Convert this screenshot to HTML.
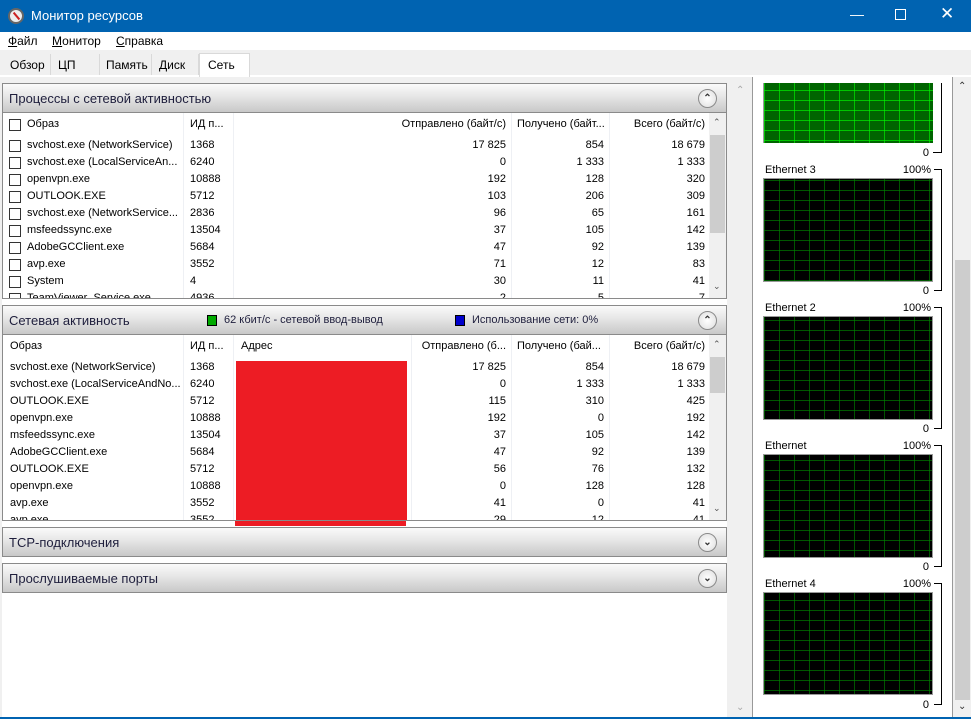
<!DOCTYPE html>
<html><head><meta charset="utf-8"><style>
*{margin:0;padding:0;box-sizing:border-box}
body{width:971px;height:719px;position:relative;overflow:hidden;background:#f0f0f0;font-family:"Liberation Sans",sans-serif;font-size:11px;color:#000}
.a{position:absolute}
.title{left:0;top:0;width:971px;height:32px;background:#0063b1;color:#fff;font-size:13px}
.menu{left:0;top:32px;width:971px;height:18px;background:#fff;font-size:12px}
.menu span{position:absolute;top:2px}
.tab{position:absolute;top:54px;height:21px;font-size:12px;padding:4px 0 0 0;border-right:1px solid #d9d9d9}
.hdr{position:absolute;left:2px;width:725px;height:30px;background:linear-gradient(#fafafa,#e6e6e6 45%,#c8c8c8);border:1px solid #8a8a8a;font-size:13px;color:#1e1e3c}
.hdr .t{position:absolute;left:6px;top:7px}
.btn{position:absolute;right:9px;top:5px;width:19px;height:19px;border-radius:50%;border:1px solid #8a8a8a;background:radial-gradient(#fff,#ddd);font-size:10px;text-align:center;line-height:17px;font-weight:bold;color:#333}
.tbl{position:absolute;left:2px;width:725px;background:#fff;border-left:1px solid #8a8a8a;border-right:1px solid #8a8a8a;border-bottom:1px solid #8a8a8a;overflow:hidden}
.r{position:absolute;left:0;height:17px;width:708px;white-space:nowrap}
.r span{position:absolute;top:2px}
.cb{position:absolute;left:6px;top:3px;width:12px;height:12px;border:1px solid #333;background:#fff}
.rt{text-align:right}
.vl{position:absolute;top:0;bottom:0;width:1px;background:#eef0f4}
.sb{position:absolute;right:0;top:0;width:17px;bottom:0;background:#f0f0f0}
.lbl{position:absolute;font-size:11px}
.g{position:absolute;left:763px;width:170px;border-top:2px solid #999;border-left:1px solid #999}
</style></head><body>
<div class="a title"><div class="a" style="left:8px;top:8px;width:16px;height:16px;border-radius:50%;background:#eee;border:2px solid #666"><div class="a" style="left:2px;top:5px;width:9px;height:2px;background:#c22;transform:rotate(50deg)"></div></div>
<div class="a" style="left:31px;top:8px">Монитор ресурсов</div>
<div class="a" style="left:850px;top:6px;font-size:14px">&#8212;</div>
<div class="a" style="left:895px;top:9px;width:11px;height:11px;border:1px solid #fff"></div>
<div class="a" style="left:940px;top:4px;font-size:17px">&#10005;</div></div>
<div class="a menu"><span style="left:8px"><u>Ф</u>айл</span><span style="left:52px"><u>М</u>онитор</span><span style="left:116px"><u>С</u>правка</span></div>
<div class="a" style="left:0;top:50px;width:971px;height:27px;background:#f0f0f0;border-bottom:2px solid #fff"></div>
<div class="tab" style="left:4px;width:47px;padding-left:6px">Обзор</div>
<div class="tab" style="left:51px;width:49px;padding-left:7px">ЦП</div>
<div class="tab" style="left:100px;width:52px;padding-left:6px">Память</div>
<div class="tab" style="left:152px;width:47px;padding-left:7px">Диск</div>
<div class="tab" style="left:199px;top:53px;height:24px;width:51px;background:#fff;border:1px solid #d9d9d9;border-bottom:none;padding-left:8px">Сеть</div>
<div class="a" style="left:2px;top:83px;width:725px;height:636px;background:#fff"></div>

<div class="hdr" style="top:83px"><div class="t">Процессы с сетевой активностью</div><div class="btn">&#8963;</div></div>
<div class="tbl" style="top:113px;height:186px">
<div class="vl" style="left:180px"></div><div class="vl" style="left:230px"></div><div class="vl" style="left:508px"></div><div class="vl" style="left:606px"></div>
<div class="r" style="top:3px;height:20px"><div class="cb"></div><span style="left:24px">Образ</span><span style="left:187px">ИД п...</span><span class="rt" style="right:205px">Отправлено (байт/с)</span><span style="left:514px">Получено (байт...</span><span class="rt" style="right:6px">Всего (байт/с)</span></div>
<div class="r" style="top:24px"><div class="cb"></div><span style="left:24px">svchost.exe (NetworkService)</span><span style="left:187px">1368</span><span style="right:205px">17 825</span><span style="right:107px">854</span><span style="right:6px">18 679</span></div>
<div class="r" style="top:41px"><div class="cb"></div><span style="left:24px">svchost.exe (LocalServiceAn...</span><span style="left:187px">6240</span><span style="right:205px">0</span><span style="right:107px">1 333</span><span style="right:6px">1 333</span></div>
<div class="r" style="top:58px"><div class="cb"></div><span style="left:24px">openvpn.exe</span><span style="left:187px">10888</span><span style="right:205px">192</span><span style="right:107px">128</span><span style="right:6px">320</span></div>
<div class="r" style="top:75px"><div class="cb"></div><span style="left:24px">OUTLOOK.EXE</span><span style="left:187px">5712</span><span style="right:205px">103</span><span style="right:107px">206</span><span style="right:6px">309</span></div>
<div class="r" style="top:92px"><div class="cb"></div><span style="left:24px">svchost.exe (NetworkService...</span><span style="left:187px">2836</span><span style="right:205px">96</span><span style="right:107px">65</span><span style="right:6px">161</span></div>
<div class="r" style="top:109px"><div class="cb"></div><span style="left:24px">msfeedssync.exe</span><span style="left:187px">13504</span><span style="right:205px">37</span><span style="right:107px">105</span><span style="right:6px">142</span></div>
<div class="r" style="top:126px"><div class="cb"></div><span style="left:24px">AdobeGCClient.exe</span><span style="left:187px">5684</span><span style="right:205px">47</span><span style="right:107px">92</span><span style="right:6px">139</span></div>
<div class="r" style="top:143px"><div class="cb"></div><span style="left:24px">avp.exe</span><span style="left:187px">3552</span><span style="right:205px">71</span><span style="right:107px">12</span><span style="right:6px">83</span></div>
<div class="r" style="top:160px"><div class="cb"></div><span style="left:24px">System</span><span style="left:187px">4</span><span style="right:205px">30</span><span style="right:107px">11</span><span style="right:6px">41</span></div>
<div class="r" style="top:177px"><div class="cb"></div><span style="left:24px">TeamViewer_Service.exe</span><span style="left:187px">4936</span><span style="right:205px">2</span><span style="right:107px">5</span><span style="right:6px">7</span></div>
<div class="sb"><div class="a" style="left:4px;top:4px;font-size:9px;color:#555">&#8963;</div><div class="a" style="left:1px;top:22px;width:15px;height:98px;background:#cdcdcd"></div><div class="a" style="left:4px;top:168px;font-size:9px;color:#555">&#8964;</div></div>
</div>

<div class="hdr" style="top:305px"><div class="t">Сетевая активность</div>
<div class="a" style="left:204px;top:9px;width:10px;height:11px;background:#0a0;border:1px solid #000"></div><div class="a" style="left:221px;top:8px;font-size:11px">62 кбит/с - сетевой ввод-вывод</div>
<div class="a" style="left:452px;top:9px;width:10px;height:11px;background:#00c;border:1px solid #000"></div><div class="a" style="left:469px;top:8px;font-size:11px">Использование сети: 0%</div>
<div class="btn">&#8963;</div></div>
<div class="tbl" style="top:335px;height:186px">
<div class="vl" style="left:180px"></div><div class="vl" style="left:230px"></div><div class="vl" style="left:408px"></div><div class="vl" style="left:508px"></div><div class="vl" style="left:606px"></div>
<div class="a" style="left:233px;top:26px;width:171px;height:200px;background:#ed1c24"></div>
<div class="r" style="top:3px;height:20px"><span style="left:7px">Образ</span><span style="left:187px">ИД п...</span><span style="left:238px">Адрес</span><span style="right:205px">Отправлено (б...</span><span style="left:514px">Получено (бай...</span><span style="right:6px">Всего (байт/с)</span></div>
<div class="r" style="top:24px"><span style="left:7px">svchost.exe (NetworkService)</span><span style="left:187px">1368</span><span style="right:205px">17 825</span><span style="right:107px">854</span><span style="right:6px">18 679</span></div>
<div class="r" style="top:41px"><span style="left:7px">svchost.exe (LocalServiceAndNo...</span><span style="left:187px">6240</span><span style="right:205px">0</span><span style="right:107px">1 333</span><span style="right:6px">1 333</span></div>
<div class="r" style="top:58px"><span style="left:7px">OUTLOOK.EXE</span><span style="left:187px">5712</span><span style="right:205px">115</span><span style="right:107px">310</span><span style="right:6px">425</span></div>
<div class="r" style="top:75px"><span style="left:7px">openvpn.exe</span><span style="left:187px">10888</span><span style="right:205px">192</span><span style="right:107px">0</span><span style="right:6px">192</span></div>
<div class="r" style="top:92px"><span style="left:7px">msfeedssync.exe</span><span style="left:187px">13504</span><span style="right:205px">37</span><span style="right:107px">105</span><span style="right:6px">142</span></div>
<div class="r" style="top:109px"><span style="left:7px">AdobeGCClient.exe</span><span style="left:187px">5684</span><span style="right:205px">47</span><span style="right:107px">92</span><span style="right:6px">139</span></div>
<div class="r" style="top:126px"><span style="left:7px">OUTLOOK.EXE</span><span style="left:187px">5712</span><span style="right:205px">56</span><span style="right:107px">76</span><span style="right:6px">132</span></div>
<div class="r" style="top:143px"><span style="left:7px">openvpn.exe</span><span style="left:187px">10888</span><span style="right:205px">0</span><span style="right:107px">128</span><span style="right:6px">128</span></div>
<div class="r" style="top:160px"><span style="left:7px">avp.exe</span><span style="left:187px">3552</span><span style="right:205px">41</span><span style="right:107px">0</span><span style="right:6px">41</span></div>
<div class="r" style="top:177px"><span style="left:7px">avp.exe</span><span style="left:187px">3552</span><span style="right:205px">29</span><span style="right:107px">12</span><span style="right:6px">41</span></div>
<div class="sb"><div class="a" style="left:4px;top:4px;font-size:9px;color:#555">&#8963;</div><div class="a" style="left:1px;top:22px;width:15px;height:36px;background:#cdcdcd"></div><div class="a" style="left:4px;top:168px;font-size:9px;color:#555">&#8964;</div></div>
</div>
<div class="a" style="left:235px;top:521px;width:171px;height:5px;background:#ed1c24"></div>

<div class="hdr" style="top:527px"><div class="t">TCP-подключения</div><div class="btn">&#8964;</div></div>
<div class="hdr" style="top:563px"><div class="t">Прослушиваемые порты</div><div class="btn">&#8964;</div></div>

<div class="a" style="left:731px;top:77px;width:18px;height:642px;background:#f0f0f0"><div class="a" style="left:5px;top:8px;color:#aaa;font-size:10px">&#8963;</div><div class="a" style="left:5px;top:625px;color:#aaa;font-size:10px">&#8964;</div></div>
<div class="a" style="left:752px;top:77px;width:201px;height:642px;background:#fff;border-left:1px solid #999;border-right:1px solid #999"></div>
<div class="a" style="left:954px;top:77px;width:17px;height:642px;background:#f0f0f0"><div class="a" style="left:4px;top:4px;font-size:10px;color:#333">&#8963;</div><div class="a" style="left:1px;top:183px;width:15px;height:440px;background:#cdcdcd"></div><div class="a" style="left:4px;top:624px;font-size:10px;color:#333">&#8964;</div></div>

<svg class="a" style="left:0;top:0" width="971" height="719">
<defs>
<pattern id="pg" x="764" y="0" width="15" height="10" patternUnits="userSpaceOnUse"><path d="M0 0V10M0 0H15" stroke="#00ff00" stroke-width="1.2" fill="none"/></pattern>
<pattern id="pb" x="764" y="0" width="15" height="10" patternUnits="userSpaceOnUse"><path d="M0 0V10M0 0H15" stroke="#008a00" stroke-width="1.2" fill="none"/></pattern>
</defs>
<rect x="763" y="83" width="170" height="60" fill="#006400"/><rect x="763" y="83" width="170" height="60" fill="url(#pg)"/>
<line x1="763.5" y1="83" x2="763.5" y2="143" stroke="#999"/>
<g font-family="Liberation Sans" font-size="11">
<text x="929" y="156" text-anchor="end">0</text><path d="M933 152.5H941.5V83" stroke="#000" fill="none"/>
<g id="gr">
<text x="765" y="173">Ethernet 3</text><text x="931" y="173" text-anchor="end">100%</text>
<rect x="763" y="178" width="170" height="104" fill="#000"/><rect x="763" y="178" width="170" height="104" fill="url(#pb)" transform="translate(0,0)"/>
<rect x="763.5" y="178.5" width="169" height="103" fill="none" stroke="#999"/>
<text x="929" y="294" text-anchor="end">0</text><path d="M934 169.5H941.5V290.5H934" stroke="#000" fill="none"/>
</g>
<text x="765" y="311">Ethernet 2</text><text x="931" y="311" text-anchor="end">100%</text>
<rect x="763" y="316" width="170" height="104" fill="#000"/><rect x="763" y="316" width="170" height="104" fill="url(#pb)"/>
<rect x="763.5" y="316.5" width="169" height="103" fill="none" stroke="#999"/>
<text x="929" y="432" text-anchor="end">0</text><path d="M934 307.5H941.5V428.5H934" stroke="#000" fill="none"/>
<text x="765" y="449">Ethernet</text><text x="931" y="449" text-anchor="end">100%</text>
<rect x="763" y="454" width="170" height="104" fill="#000"/><rect x="763" y="454" width="170" height="104" fill="url(#pb)"/>
<rect x="763.5" y="454.5" width="169" height="103" fill="none" stroke="#999"/>
<text x="929" y="570" text-anchor="end">0</text><path d="M934 445.5H941.5V566.5H934" stroke="#000" fill="none"/>
<text x="765" y="587">Ethernet 4</text><text x="931" y="587" text-anchor="end">100%</text>
<rect x="763" y="592" width="170" height="103" fill="#000"/><rect x="763" y="592" width="170" height="103" fill="url(#pb)"/>
<rect x="763.5" y="592.5" width="169" height="102" fill="none" stroke="#999"/>
<text x="929" y="708" text-anchor="end">0</text><path d="M934 583.5H941.5V704.5H934" stroke="#000" fill="none"/>
</g>
<line x1="0" y1="718" x2="971" y2="718" stroke="#0063b1" stroke-width="2"/>
</svg>
</body></html>
